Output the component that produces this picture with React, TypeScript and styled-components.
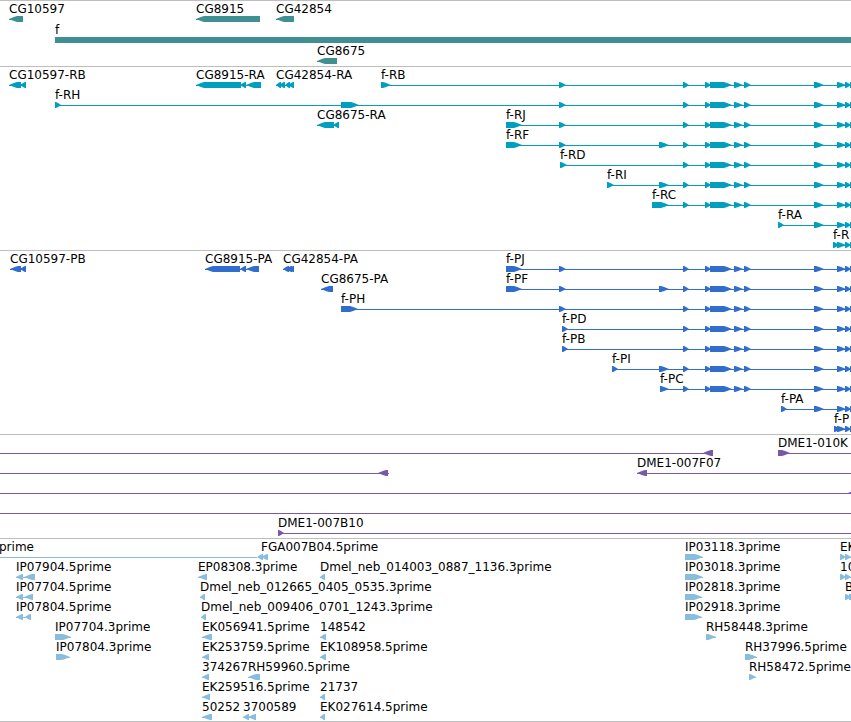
import React from "react";
import styled, { createGlobalStyle } from "styled-components";

type Block = [start: number, end: number];

interface Feature {
  name?: string;
  start: number;
  end: number;
  strand: 1 | -1;
  blocks?: Block[];
}

interface TrackData {
  title: string;
  color: string;
  gap?: number;
  rows: Feature[][];
}

const FAR = 1400;

const fwd = (name: string, blocks: Block[], end?: number): Feature => ({
  name,
  start: blocks[0][0],
  end: end ?? blocks[blocks.length - 1][1],
  strand: 1,
  blocks,
});

const rev = (name: string, blocks: Block[], start?: number, end?: number): Feature => ({
  name,
  start: start ?? blocks[0][0],
  end: end ?? blocks[blocks.length - 1][1],
  strand: -1,
  blocks,
});

const tail: Block[] = [[814, 824], [837, 846], [845, 851], [850, FAR]];
const core: Block[] = [[683, 689], [705, 711], [710, 732], [734, 743], [744, 751], ...tail];
const second: Block = [559, 566];
const third: Block = [659, 669];

const tracks: TrackData[] = [
  {
    title: "Genes",
    color: "#3f8f93",
    gap: 1,
    rows: [
      [rev("CG10597", [[9, 23]]), rev("CG8915", [[196, 260]]), rev("CG42854", [[276, 294]])],
      [fwd("f", [[55, FAR]])],
      [rev("CG8675", [[317, 337]])],
    ],
  },
  {
    title: "Transcripts",
    color: "#009fc0",
    rows: [
      [
        rev("CG10597-RB", [[9, 21], [20, 26]]),
        rev("CG8915-RA", [[196, 241], [240, 246], [246, 261]]),
        rev("CG42854-RA", [[276, 281], [279, 285], [285, 290], [288, 294]]),
        fwd("f-RB", [[381, 391], second, ...core]),
      ],
      [fwd("f-RH", [[55, 61], [341, 359], second, ...core])],
      [rev("CG8675-RA", [[317, 334], [333, 339]]), fwd("f-RJ", [[506, 522], second, ...core])],
      [fwd("f-RF", [[506, 522], second, third, ...core])],
      [fwd("f-RD", [[560, 567], ...core])],
      [fwd("f-RI", [[607, 614], third, ...core])],
      [fwd("f-RC", [[652, 669], ...core])],
      [fwd("f-RA", [[778, 784], ...tail])],
      [fwd("f-R", [[833, 839], ...tail.slice(1)])],
    ],
  },
  {
    title: "Proteins",
    color: "#316dcd",
    rows: [
      [
        rev("CG10597-PB", [[10, 21], [20, 26]]),
        rev("CG8915-PA", [[205, 240], [240, 246], [246, 259]]),
        rev("CG42854-PA", [[283, 289], [286, 292], [289, 294]]),
        fwd("f-PJ", [[506, 522], second, ...core]),
      ],
      [rev("CG8675-PA", [[321, 333]]), fwd("f-PF", [[506, 522], second, third, ...core])],
      [fwd("f-PH", [[341, 358], second, ...core])],
      [fwd("f-PD", [[562, 568], ...core])],
      [fwd("f-PB", [[562, 568], ...core])],
      [fwd("f-PI", [[612, 618], third, ...core])],
      [fwd("f-PC", [[660, 669], ...core])],
      [fwd("f-PA", [[781, 787], ...tail])],
      [fwd("f-P", [[834, 840], ...tail.slice(1)])],
    ],
  },
  {
    title: "BAC clones",
    color: "#7759a9",
    rows: [
      [rev("", [[703, 713]], 0), fwd("DME1-010K", [[778, 790]], FAR)],
      [rev("", [[378, 388]], 0, 389), rev("DME1-007F07", [[637, 647]], 637, FAR)],
      [rev("", [[848, 860]], 0)],
      [{ start: 0, end: FAR, strand: 1 }],
      [fwd("DME1-007B10", [[278, 284]], FAR)],
    ],
  },
  {
    title: "cDNA and EST",
    color: "#88bddd",
    rows: [
      [
        { name: "prime", start: -1, end: 257, strand: -1 },
        rev("FGA007B04.5prime", [[257, 263], [261, 268]], 261),
        fwd("IP03118.3prime", [[685, 703]]),
        fwd("EK", [[840, 846], [845, 851]], FAR),
      ],
      [
        rev("IP07904.5prime", [[16, 23], [24, 35]]),
        rev("EP08308.3prime", [[198, 207]]),
        rev("Dmel_neb_014003_0887_1136.3prime", [[320, 325]]),
        fwd("IP03018.3prime", [[685, 703]]),
        fwd("10", [[840, 846], [845, 851]], FAR),
      ],
      [
        rev("IP07704.5prime", [[16, 23], [24, 33]]),
        rev("Dmel_neb_012665_0405_0535.3prime", [[200, 205]]),
        fwd("IP02818.3prime", [[685, 702]]),
        fwd("B", [[845, 851], [849, 860]]),
      ],
      [
        rev("IP07804.5prime", [[16, 23], [25, 31]]),
        rev("Dmel_neb_009406_0701_1243.3prime", [[201, 206]]),
        fwd("IP02918.3prime", [[685, 702]]),
      ],
      [
        fwd("IP07704.3prime", [[55, 71]]),
        rev("EK056941.5prime", [[202, 212]]),
        rev("148542", [[320, 326]]),
        fwd("RH58448.3prime", [[706, 716]]),
      ],
      [
        fwd("IP07804.3prime", [[56, 70]]),
        rev("EK253759.5prime", [[202, 209]]),
        rev("EK108958.5prime", [[320, 326]]),
        fwd("RH37996.5prime", [[745, 757]]),
      ],
      [
        rev("374267", [[202, 209]]),
        rev("RH59960.5prime", [[248, 260]]),
        fwd("RH58472.5prime", [[749, 756]]),
      ],
      [rev("EK259516.5prime", [[202, 210]]), rev("21737", [[320, 325]])],
      [
        rev("50252", [[202, 212]]),
        rev("3700589", [[243, 249], [248, 256]]),
        rev("EK027614.5prime", [[320, 325]]),
      ],
    ],
  },
];

const GlobalStyle = createGlobalStyle`
  body {
    margin: 0;
    background: #ffffff;
    color: #000000;
    font-family: "DejaVu Sans", sans-serif;
    font-size: 12px;
    line-height: 14px;
  }
`;

const Browser = styled.main`
  width: 100%;
  overflow: hidden;
  border-bottom: 1px solid #bebebe;
`;

const Track = styled.section<{ $gap: number; $color: string }>`
  display: flex;
  flex-direction: column;
  gap: ${(p) => p.$gap}px;
  padding: 1px 0 2px;
  border-top: 1px solid #bebebe;
  color: ${(p) => p.$color};

  &:last-child {
    padding-bottom: 1px;
  }
`;

const Row = styled.div`
  display: flex;
  flex-direction: column;
`;

const Labels = styled.div`
  position: relative;
  height: 14px;
  color: #000000;
`;

const Label = styled.span<{ $x: number }>`
  position: absolute;
  left: ${(p) => p.$x}px;
  white-space: nowrap;
`;

const Glyphs = styled.svg`
  display: block;
  width: 100%;
  height: 6px;
  fill: currentColor;
`;

function blockPoints([a, b]: Block, strand: 1 | -1): string {
  const head = Math.min(b - a - 1, 8);
  const shoulder = head * 0.6;
  return strand === 1
    ? `${a},0 ${b - head},0 ${b - shoulder},1 ${b},3 ${b - shoulder},5 ${b - head},6 ${a},6`
    : `${b},0 ${a + head},0 ${a + shoulder},1 ${a},3 ${a + shoulder},5 ${a + head},6 ${b},6`;
}

function FeatureGlyph({ feature }: { feature: Feature }) {
  return (
    <g>
      <rect
        x={feature.start}
        y={3}
        width={feature.end - feature.start}
        height={1}
        shapeRendering="crispEdges"
      />
      {feature.blocks?.map((block) => (
        <polygon key={block[0]} points={blockPoints(block, feature.strand)} />
      ))}
    </g>
  );
}

function FeatureRow({ features }: { features: Feature[] }) {
  return (
    <Row>
      <Labels>
        {features.map((f) =>
          f.name ? (
            <Label key={f.name} $x={f.start}>
              {f.name}
            </Label>
          ) : null
        )}
      </Labels>
      <Glyphs aria-hidden="true">
        {features.map((f) => (
          <FeatureGlyph key={f.start} feature={f} />
        ))}
      </Glyphs>
    </Row>
  );
}

export default function App() {
  return (
    <>
      <GlobalStyle />
      <Browser>
        {tracks.map((track) => (
          <Track key={track.title} aria-label={track.title} $gap={track.gap ?? 0} $color={track.color}>
            {track.rows.map((features, i) => (
              <FeatureRow key={i} features={features} />
            ))}
          </Track>
        ))}
      </Browser>
    </>
  );
}
